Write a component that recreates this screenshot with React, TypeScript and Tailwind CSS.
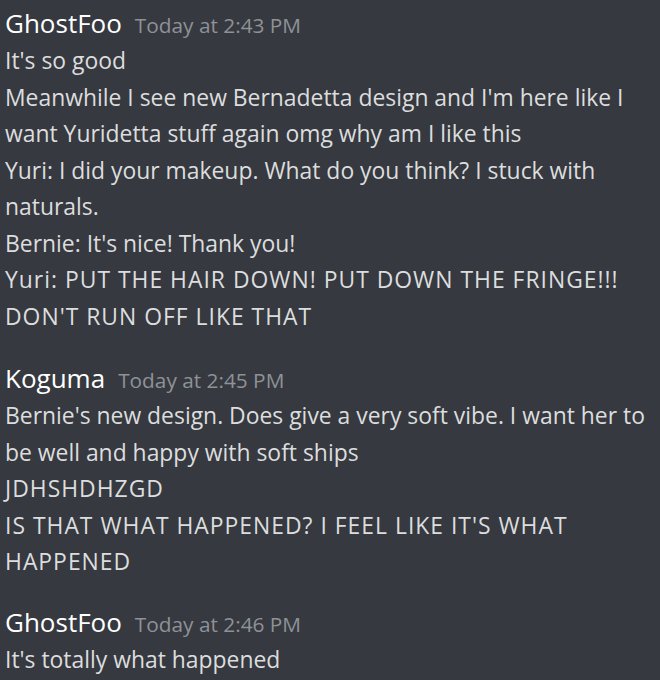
import React from 'react';

type Message = {
  author: string;
  time: string;
  lines: string[];
  gap: string;
};

const messages: Message[] = [
  {
    author: 'GhostFoo',
    time: 'Today at 2:43 PM',
    gap: 'pt-[5px]',
    lines: [
      "It's so good",
      "Meanwhile I see new Bernadetta design and I'm here like I",
      'want Yuridetta stuff again omg why am I like this',
      'Yuri: I did your makeup. What do you think? I stuck with',
      'naturals.',
      "Bernie: It's nice! Thank you!",
      'Yuri: PUT THE HAIR DOWN! PUT DOWN THE FRINGE!!!',
      "DON'T RUN OFF LIKE THAT",
    ],
  },
  {
    author: 'Koguma',
    time: 'Today at 2:45 PM',
    gap: 'pt-[25px]',
    lines: [
      "Bernie's new design. Does give a very soft vibe. I want her to",
      'be well and happy with soft ships',
      'JDHSHDHZGD',
      "IS THAT WHAT HAPPENED? I FEEL LIKE IT'S WHAT",
      'HAPPENED',
    ],
  },
  {
    author: 'GhostFoo',
    time: 'Today at 2:46 PM',
    gap: 'pt-[23px]',
    lines: ["It's totally what happened"],
  },
];

// mostly upper-case lines get a bit of tracking (caps run wide in the original font)
const isShouting = (s: string) => {
  const upper = (s.match(/[A-Z]/g) || []).length;
  const lower = (s.match(/[a-z]/g) || []).length;
  return upper > lower * 2;
};

export default function App() {
  return (
    <div
      className="w-[660px] h-[680px] overflow-hidden bg-[#36393f] pl-[5px]"
      style={{ fontFamily: '"Open Sans", "Noto Sans", sans-serif' }}
    >
      {messages.map((m, i) => (
        <div key={i} className={m.gap}>
          <div className="flex items-baseline gap-[13px] h-[36px] leading-[36px]">
            <span className="text-[26px] text-white">{m.author}</span>
            <span className="text-[20.8px] text-[#8e9297]">{m.time}</span>
          </div>
          <div className="mt-[2px] text-[22.9px] leading-[36.5px] text-[#dcddde]">
            {m.lines.map((l, j) => (
              <div
                key={j}
                className={isShouting(l) ? 'whitespace-nowrap tracking-[1px]' : 'whitespace-nowrap'}
              >
                {l}
              </div>
            ))}
          </div>
        </div>
      ))}
    </div>
  );
}
